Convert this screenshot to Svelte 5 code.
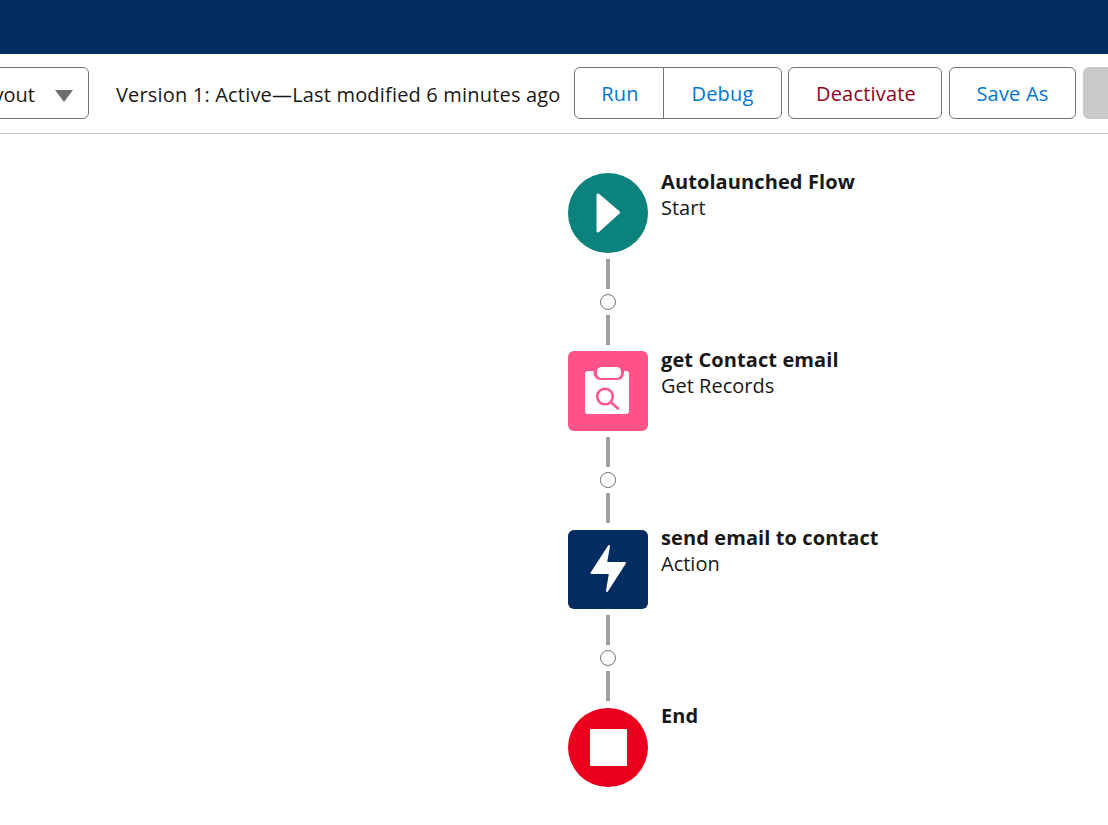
<script lang="ts">
	const nodes = [
		{ title: 'Autolaunched Flow', sub: 'Start', kind: 'start' },
		{ title: 'get Contact email', sub: 'Get Records', kind: 'records' },
		{ title: 'send email to contact', sub: 'Action', kind: 'action' },
		{ title: 'End', sub: '', kind: 'end' }
	];
</script>

<div class="page">
	<header class="topbar"></header>

	<div class="toolbar">
		<div class="select">
			<span class="select-text">Auto-Layout</span>
			<svg class="caret" width="18" height="12" viewBox="0 0 18 12"><path d="M0 0h18L9 12z" fill="#706e6b" /></svg>
		</div>
		<span class="version">Version 1: Active—Last modified 6 minutes ago</span>
		<div class="group">
			<button class="btn run">Run</button>
			<button class="btn debug">Debug</button>
		</div>
		<button class="btn deactivate">Deactivate</button>
		<button class="btn save">Save As</button>
		<button class="btn disabled" aria-label="Activate"></button>
	</div>

	<main class="canvas">
		{#each nodes as node, i}
			<div class="node">
				<div class="icon {node.kind}">
					{#if node.kind === 'start'}
						<svg width="80" height="80" viewBox="0 0 80 80">
							<path d="M30 22 50.500 39.500 30 58z" fill="#fff" stroke="#fff" stroke-width="3" stroke-linejoin="round" />
						</svg>
					{:else if node.kind === 'records'}
						<svg width="80" height="80" viewBox="0 0 80 80">
							<path d="M20 20h5.500v1.500c0 4 3 7.500 7.500 7.500h16c4.500 0 7-3 7-7.500V20H58c2 0 3 1 3 3v37c0 2-1 3-3 3H20c-2 0-3-1-3-3V23c0-2 1-3 3-3z" fill="#fff" />
							<rect x="29" y="16" width="24" height="11" rx="4.500" fill="#fff" />
							<circle cx="37" cy="45.500" r="7.800" fill="none" stroke="#ff538a" stroke-width="2.500" />
							<path d="M42.800 51.300 50 57.500" stroke="#ff538a" stroke-width="2.500" stroke-linecap="round" />
						</svg>
					{:else if node.kind === 'action'}
						<svg width="80" height="80" viewBox="0 0 80 80">
							<path d="M41 17 23.500 44H42L39 62 57 34H38z" fill="#fff" stroke="#fff" stroke-width="2" stroke-linejoin="round" />
						</svg>
					{:else}
						<div class="stop"></div>
					{/if}
				</div>
				<div class="label">
					<div class="title">{node.title}</div>
					{#if node.sub}<div class="sub">{node.sub}</div>{/if}
				</div>
			</div>
			{#if i < nodes.length - 1}
				<div class="connector">
					<div class="line"></div>
					<div class="dot"></div>
					<div class="line"></div>
				</div>
			{/if}
		{/each}
	</main>
</div>

<style>
	:global(body) {
		margin: 0;
		background: #fff;
		overflow: hidden;
	}

	.page {
		width: 1108px;
		height: 825px;
		overflow: hidden;
		font-family: "Open Sans", "Noto Sans", sans-serif;
		font-size: 20px;
		color: #181818;
	}

	.topbar {
		height: 54px;
		background: #032d60;
	}

	.toolbar {
		display: flex;
		align-items: flex-start;
		height: 80px;
		box-sizing: border-box;
		padding-top: 13px;
		border-bottom: 1px solid #c9c9c9;
		overflow: hidden;
	}

	.select {
		flex: none;
		box-sizing: border-box;
		width: 99px;
		height: 52px;
		margin-left: -10px;
		padding: 0 15px 0 0;
		display: flex;
		align-items: center;
		justify-content: flex-end;
		gap: 20px;
		border: 1px solid #747474;
		border-radius: 6px;
		white-space: nowrap;
	}

	.select-text {
		margin-top: 2px;
	}

	.caret {
		flex: none;
		margin-top: 5px;
	}

	.version {
		flex: none;
		width: 458px;
		margin-left: 27px;
		line-height: 56px;
		letter-spacing: 0.18px;
		white-space: nowrap;
	}

	.group {
		display: flex;
		flex: none;
	}

	.btn {
		flex: none;
		box-sizing: border-box;
		height: 52px;
		padding: 0;
		background: #fff;
		border: 1px solid #747474;
		border-radius: 6px;
		font: inherit;
		letter-spacing: 0.2px;
		color: #0176d3;
	}

	.run {
		width: 90px;
		padding-left: 2px;
		border-radius: 6px 0 0 6px;
	}

	.debug {
		width: 119px;
		margin-left: -1px;
		border-radius: 0 6px 6px 0;
	}

	.deactivate {
		width: 154px;
		margin-left: 6px;
		padding-left: 2px;
		color: #8e0321;
	}

	.save {
		width: 127px;
		margin-left: 7px;
	}

	.disabled {
		width: 80px;
		margin-left: 7px;
		background: #c9c9c9;
		border-color: #c9c9c9;
	}

	.canvas {
		display: flex;
		flex-direction: column;
		padding: 39px 0 0 568px;
	}

	.node {
		display: flex;
		height: 79.500px;
	}

	.icon {
		flex: none;
		width: 80px;
		height: 79.500px;
		display: flex;
		align-items: center;
		justify-content: center;
		border-radius: 6px;
	}

	.start {
		background: #0b827c;
		border-radius: 50%;
	}

	.records {
		background: #ff538a;
	}

	.action {
		background: #032d60;
	}

	.end {
		background: #ea001e;
		border-radius: 50%;
	}

	.stop {
		width: 37px;
		height: 37px;
		background: #fff;
	}

	.label {
		margin: -4.500px 0 0 13px;
		line-height: 26px;
		white-space: nowrap;
	}

	.title {
		font-weight: 700;
		letter-spacing: 0.1px;
		color: #181818;
	}

	.connector {
		width: 80px;
		height: 98.830px;
		box-sizing: border-box;
		padding-top: 6px;
		display: flex;
		flex-direction: column;
		align-items: center;
	}

	.line {
		flex: none;
		width: 4px;
		height: 30px;
		background: #a0a0a0;
	}

	.dot {
		flex: none;
		box-sizing: border-box;
		width: 16px;
		height: 16px;
		margin: 5px 0;
		border: 1.500px solid #747474;
		border-radius: 50%;
		background: #fff;
	}
</style>
